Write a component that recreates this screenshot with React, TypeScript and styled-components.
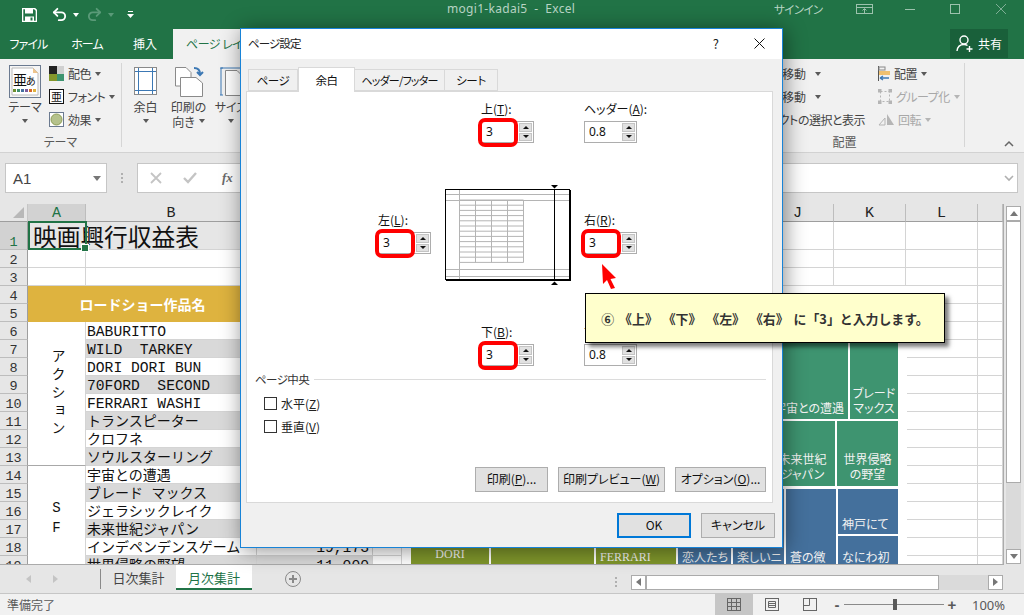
import React from 'react';
import styled, { createGlobalStyle } from 'styled-components';
import { Undo2, Redo2 } from 'lucide-react';

const UI_FONT = '"Noto Sans CJK JP", "Noto Sans", sans-serif';
const CELL_FONT = '"Liberation Mono", "Noto Sans CJK JP", monospace';

const GlobalStyle = createGlobalStyle`
    html, body {
        margin: 0;
        padding: 0;
        overflow: hidden;
        background: #e6e6e6;
    }
    * { box-sizing: border-box; }
`

const Window = styled.div`
    position: relative;
    width: 1024px;
    height: 615px;
    display: flex;
    flex-direction: column;
    overflow: hidden;
    font-family: ${UI_FONT};
    font-feature-settings: "palt";
    font-size: 12px;
    color: #444;
`

/* ---------- title bar ---------- */
const TitleBar = styled.div`
    position: relative;
    height: 29px;
    background: #217346;
    display: flex;
    align-items: center;
    padding-left: 22px;
    color: #c6ddd0;
`
const Quick = styled.div<{ $w: number }>`
    width: ${p => p.$w}px;
    display: flex;
    align-items: center;
    flex: none;
`
const TitleText = styled.div`
    position: absolute;
    left: 447px;
    top: 0;
    line-height: 17px;
    font-family: "Noto Sans", sans-serif;
    font-size: 12px;
    letter-spacing: 0.3px;
    white-space: pre;
    color: #b9d5c5;
`
const SignIn = styled.div`
    position: absolute;
    left: 774px;
    top: 1px;
    line-height: 17px;
    color: #b9d5c5;
    font-size: 11.5px;
    letter-spacing: -0.6px;
`
const WinControls = styled.svg`
    position: absolute;
    left: 850px;
    top: 0;
`

/* ---------- tabs ---------- */
const TabBar = styled.div`
    height: 30px;
    background: #217346;
    display: flex;
    position: relative;
`
const RibbonTab = styled.div<{ $w: number; $tight?: boolean }>`
    width: ${p => p.$w}px;
    text-align: center;
    line-height: 29px;
    font-size: 12px;
    letter-spacing: ${p => (p.$tight ? '-0.9px' : '0')};
    color: #fff;
`
const ActiveRibbonTab = styled.div`
    width: 96px;
    padding-left: 13px;
    line-height: 29px;
    white-space: nowrap;
    overflow: hidden;
    letter-spacing: -0.5px;
    color: #217346;
    background: #f1f1f1;
`
const ShareButton = styled.div`
    margin-left: auto;
    margin-right: 16px;
    width: 58px;
    height: 29px;
    background: #19603a;
    color: #fff;
    display: flex;
    align-items: center;
    justify-content: center;
    gap: 3px;
    font-size: 12px;
`

/* ---------- ribbon ---------- */
const Ribbon = styled.div`
    height: 94px;
    background: #f1f1f1;
    border-bottom: 1px solid #d2d2d2;
    display: flex;
    color: #444;
`
const Group = styled.div<{ $w: number }>`
    position: relative;
    width: ${p => p.$w}px;
    flex: none;
    margin: 4px 0 5px;
    border-right: 1px solid #d6d6d6;
    display: flex;
    flex-direction: column;
`
const GroupBody = styled.div`
    flex: 1;
    display: flex;
`
const PageBody = styled(GroupBody)`
    width: 128px;
    flex: none;
    margin: 4px 0 0 2px;
`
const GroupLabel = styled.div`
    height: 20px;
    line-height: 22px;
    text-align: center;
    color: #595959;
`
const LargeButton = styled.div<{ $w: number }>`
    width: ${p => p.$w}px;
    display: flex;
    flex-direction: column;
    align-items: center;
    line-height: 15px;
    text-align: center;
`
const LargeIcon = styled.div`
    height: 36px;
    display: flex;
    align-items: center;
    justify-content: center;
`
const SmallList = styled.div`
    display: flex;
    flex-direction: column;
    margin: -1px 0 0 -1px;
`
const SmallRow = styled.div<{ $dim?: boolean }>`
    height: 23px;
    display: flex;
    align-items: center;
    gap: 4px;
    white-space: nowrap;
    letter-spacing: -0.5px;
    color: ${p => (p.$dim ? '#a8a8a8' : '#444')};
`
const Caret = styled.span<{ $dim?: boolean; $light?: string }>`
    display: inline-block;
    width: 0;
    height: 0;
    border-left: 3.5px solid transparent;
    border-right: 3.5px solid transparent;
    border-top: 4px solid ${p => p.$light || (p.$dim ? '#b5b5b5' : '#595959')};
    flex: none;
`
const QuickCaret = styled(Caret)`
    margin-left: 5px;
`
const NameCaret = styled(Caret)`
    border-left-width: 4px;
    border-right-width: 4px;
    border-top-width: 5px;
    border-top-color: #777;
`
const CaretLine = styled.div`
    height: 14px;
    display: flex;
    align-items: center;
    gap: 4px;
`
const ArrangeLeft = styled.div`
    width: 140px;
    margin-top: -1px;
    display: flex;
    flex-direction: column;
    align-items: flex-end;
    flex: none;
`
const ArrangeRight = styled.div`
    margin: -1px 0 0 13px;
    display: flex;
    flex-direction: column;
`
const Spacer = styled.div`
    flex: 1;
`
const RibbonEnd = styled.div`
    width: 59px;
    flex: none;
`
const MoveRow = styled(SmallRow)`
    padding-right: 44px;
    gap: 9px;
    letter-spacing: 0;
`
const Collapse = styled.svg`
    position: absolute;
    left: 1004px;
    top: 140px;
`

/* ---------- formula bar ---------- */
const FormulaBar = styled.div`
    height: 51px;
    background: #e6e6e6;
    display: flex;
    padding: 10px 6px 11px 5px;
`
const NameBox = styled.div`
    width: 102px;
    background: #fff;
    border: 1px solid #c6c6c6;
    display: flex;
    align-items: center;
    justify-content: space-between;
    padding: 0 5px 0 7px;
    font-family: "Liberation Sans", sans-serif;
    font-size: 15px;
    color: #444;
`
const Grip = styled.div`
    width: 2px;
    height: 10px;
    background-image: linear-gradient(#b0b0b0 50%, transparent 50%);
    background-size: 2px 4px;
`
const GripSlot = styled.div`
    width: 30px;
    display: flex;
    align-items: center;
    justify-content: center;
`
const FormulaInput = styled.div`
    flex: 1;
    background: #fff;
    border: 1px solid #c6c6c6;
    display: flex;
    align-items: center;
    padding-right: 3px;
    justify-content: space-between;
`
const FormulaGlyph = styled.div`
    font-family: "Liberation Serif", serif;
    font-style: italic;
    font-weight: 700;
    font-size: 13px;
    color: #6a6a6a;
    margin-left: 4px;
`
const FormulaTools = styled.div`
    display: flex;
    align-items: center;
    gap: 21px;
    padding-left: 12px;
`

/* ---------- sheet ---------- */
const SheetArea = styled.div`
    position: relative;
    height: 361px;
    background: #e6e6e6;
    display: flex;
`
const Grid = styled.div`
    position: relative;
    width: 1004px;
    height: 361px;
    overflow: hidden;
    display: grid;
    grid-template-columns: 28px 58px 171px 116px 29px 120px 120px 120px 72px 72px 72px 25px;
    grid-template-rows: 18px 28px repeat(19, 18px);
    border-right: 1px solid #ababab;
    border-bottom: 1px solid #ababab;
`
const Corner = styled.div`
    background: #e6e6e6;
    border-right: 1px solid #c6c6c6;
    border-bottom: 1px solid #9e9e9e;
    display: flex;
    align-items: flex-end;
    justify-content: flex-end;
    padding: 0 3px 3px 0;
`
const ColHead = styled.div<{ $active?: boolean }>`
    background: ${p => (p.$active ? '#d2d2d2' : '#e6e6e6')};
    color: ${p => (p.$active ? '#217346' : '#222')};
    border-right: 1px solid #bdbdbd;
    border-bottom: 1px solid #9e9e9e;
    text-align: center;
    font-family: ${CELL_FONT};
    font-size: 15px;
    line-height: 20px;
`
const RowHead = styled.div<{ $row: number; $active?: boolean }>`
    grid-column: 1;
    grid-row: ${p => p.$row + 1};
    background: ${p => (p.$active ? '#d2d2d2' : '#e6e6e6')};
    color: ${p => (p.$active ? '#217346' : '#333')};
    border-right: 1px solid #9e9e9e;
    border-bottom: 1px solid #bdbdbd;
    display: flex;
    align-items: flex-end;
    justify-content: center;
    font-family: ${CELL_FONT};
    font-size: 13.5px;
    line-height: 13px;
`
const Cell = styled.div<{ $row: number; $col: number; $stripe?: boolean }>`
    grid-column: ${p => p.$col + 2};
    grid-row: ${p => p.$row + 1};
    background: ${p => (p.$stripe ? '#d9d9d9' : '#fff')};
    border-right: 1px solid #d4d4d4;
    border-bottom: 1px solid #d4d4d4;
    overflow: hidden;
`
const TextCell = styled(Cell)<{ $kana?: boolean }>`
    padding-left: 1px;
    font-family: ${CELL_FONT};
    font-size: ${p => (p.$kana ? '14px' : '14.67px')};
    font-feature-settings: normal;
    line-height: 20px;
    white-space: pre;
    color: #111;
`
const NumberCell = styled(TextCell)`
    text-align: right;
    padding-right: 3px;
`
const TitleCell = styled.div`
    grid-column: 2 / 4;
    grid-row: 2;
    position: relative;
    z-index: 1;
    font-family: ${UI_FONT};
    font-feature-settings: normal;
    font-size: 23.7px;
    line-height: 29px;
    padding-left: 5px;
    color: #111;
    border-bottom: 1px solid #d4d4d4;
`
const BlankTitle = styled.div`
    grid-column: 3;
    grid-row: 2;
    border-right: 1px solid #d4d4d4;
    border-left: 1px solid #d4d4d4;
`
const Selection = styled.div`
    position: absolute;
    left: 28px;
    top: 17px;
    width: 59px;
    height: 29px;
    border: 2px solid #217346;
    z-index: 2;
    &::after {
        content: '';
        position: absolute;
        right: -4px;
        bottom: -4px;
        width: 6px;
        height: 6px;
        background: #217346;
        border: 1px solid #fff;
    }
`
const GoldHead = styled.div`
    grid-column: 2 / 4;
    grid-row: 5 / 7;
    background: #deb33f;
    color: #fff;
    font-weight: 700;
    font-size: 14px;
    font-feature-settings: normal;
    display: flex;
    align-items: center;
    justify-content: center;
`
const GenreCell = styled.div<{ $from: number; $to: number }>`
    grid-column: 2;
    grid-row: ${p => p.$from + 1} / ${p => p.$to + 2};
    background: #fff;
    border-right: 1px solid #d4d4d4;
    border-bottom: 1px solid #a8a8a8;
    display: flex;
    align-items: center;
    justify-content: center;
    font-family: ${CELL_FONT};
    font-size: 14px;
    font-feature-settings: normal;
    color: #111;
`
const VerticalText = styled.div`
    writing-mode: vertical-rl;
    text-orientation: upright;
    letter-spacing: 4px;
`

/* chart floating over the cells */
const Chart = styled.div`
    position: absolute;
    left: 402px;
    top: 82px;
    width: 505px;
    height: 279px;
    background: #fff;
    padding: 14px 9px 0 9px;
    display: flex;
    flex-direction: column;
    gap: 2px;
    z-index: 1;
`
const ChartRow = styled.div<{ $h: number; $end?: boolean; $shift?: number }>`
    height: ${p => p.$h}px;
    margin-top: ${p => p.$shift || 0}px;
    flex: none;
    display: flex;
    gap: 2px;
    justify-content: ${p => (p.$end ? 'flex-end' : 'flex-start')};
`
const Tile = styled.div<{ $color: string; $w?: number; $h?: number; $flex?: boolean; $align?: string; $serif?: boolean; $pad?: number }>`
    background: ${p => p.$color};
    width: ${p => (p.$w ? `${p.$w}px` : 'auto')};
    height: ${p => (p.$h ? `${p.$h}px` : 'auto')};
    flex: ${p => (p.$flex ? 1 : 'none')};
    color: #f2f2f2;
    display: flex;
    flex-direction: column;
    justify-content: flex-end;
    align-items: ${p => p.$align || 'center'};
    padding: 0 ${p => (p.$align === 'flex-start' ? 0 : 2)}px ${p => (p.$pad === undefined ? 4 : p.$pad)}px ${p => (p.$align === 'flex-start' ? 4 : 2)}px;
    font-size: 12px;
    line-height: 15px;
    white-space: nowrap;
    overflow: hidden;
    font-family: ${p => (p.$serif ? '"Liberation Serif", serif' : UI_FONT)};
`
const Tiles = styled.div<{ $w: number }>`
    width: ${p => p.$w}px;
    flex: none;
    display: flex;
    flex-direction: column;
    gap: 2px;
`

/* scrollbars */
const VScroll = styled.div`
    margin-left: 2px;
    width: 15px;
    padding-top: 2px;
    display: flex;
    flex-direction: column;
    height: 360px;
`
const ScrollButton = styled.div<{ $w?: number; $h?: number }>`
    width: ${p => p.$w || 15}px;
    height: ${p => p.$h || 15}px;
    flex: none;
    background: #fff;
    border: 1px solid #ababab;
    display: flex;
    align-items: center;
    justify-content: center;
`
const VThumb = styled.div`
    height: 262px;
    background: #fff;
    border: 1px solid #ababab;
`
const VTrack = styled.div`
    flex: 1;
    background: #dadada;
`

/* sheet tabs */
const SheetTabs = styled.div`
    height: 28px;
    background: #e6e6e6;
    display: flex;
    align-items: flex-start;
`
const TabNav = styled.div`
    width: 100px;
    height: 27px;
    display: flex;
    align-items: center;
    padding-left: 26px;
    gap: 22px;
`
const SheetTab = styled.div<{ $active?: boolean }>`
    height: 25px;
    background: ${p => (p.$active ? '#fff' : 'transparent')};
    color: ${p => (p.$active ? '#217346' : '#444')};
    border-bottom: ${p => (p.$active ? '2px solid #217346' : 'none')};
    width: ${p => (p.$active ? 76 : 75)}px;
    text-align: center;
    line-height: 26px;
    font-size: 13px;
    font-feature-settings: normal;
`
const TabDivider = styled.div`
    width: 1px;
    height: 20px;
    margin-top: 4px;
    background: #8a8a8a;
`
const AddSheet = styled.svg`
    margin: 5px 0 0 32px;
`
const TabRight = styled.div`
    margin-left: auto;
    display: flex;
    align-items: center;
    height: 22px;
    margin-top: 6px;
    margin-right: 21px;
    gap: 14px;
`
const HScroll = styled.div`
    width: 372px;
    height: 15px;
    display: flex;
    background: #dadada;
`
const HThumb = styled.div`
    width: 293px;
    background: #fff;
    border: 1px solid #ababab;
`
const HFill = styled.div`
    flex: 1;
`

/* status bar */
const StatusBar = styled.div`
    height: 22px;
    background: #f1f1f1;
    border-top: 1px solid #c6c6c6;
    display: flex;
    align-items: center;
    padding-left: 7px;
    color: #595959;
    font-size: 12px;
    font-feature-settings: normal;
`
const ViewButtons = styled.div`
    margin-left: auto;
    display: flex;
    height: 21px;
`
const ViewButton = styled.div<{ $active?: boolean }>`
    width: 38px;
    display: flex;
    align-items: center;
    justify-content: center;
    background: ${p => (p.$active ? '#c6c6c6' : 'transparent')};
`
const ZoomBox = styled.div`
    display: flex;
    align-items: center;
    width: 195px;
    padding-left: 3px;
    flex: none;
`
const ZoomSign = styled.div`
    width: 10px;
    text-align: center;
    font-family: "Liberation Sans", sans-serif;
    font-weight: 700;
    font-size: 15px;
    color: #595959;
`
const ZoomTrack = styled.div`
    position: relative;
    width: 100px;
    height: 1px;
    margin: 0 3px 0 2px;
    background: #8a8a8a;
`
const ZoomThumb = styled.div`
    position: absolute;
    left: 49px;
    top: -5px;
    width: 4px;
    height: 11px;
    background: #595959;
`
const ZoomValue = styled.div`
    margin-left: 15px;
    font-family: "Noto Sans", sans-serif;
    font-size: 13px;
    color: #595959;
`

/* ---------- dialog ---------- */
const Dialog = styled.div`
    position: absolute;
    left: 240px;
    top: 28px;
    width: 543px;
    height: 520px;
    background: #f0f0f0;
    border: 1px solid #1883d7;
    box-shadow: 2px 2px 20px rgba(0, 0, 0, 0.45);
    z-index: 5;
    display: flex;
    flex-direction: column;
    color: #111;
`
const DialogTitle = styled.div`
    height: 30px;
    background: #fff;
    display: flex;
    align-items: center;
    padding: 0 0 2px 7px;
    color: #222;
    font-size: 11.5px;
    letter-spacing: -0.9px;
    flex: none;
`
const DialogClose = styled.svg`
    margin-left: 36px;
    margin-right: 17px;
`
const Help = styled.div`
    margin-left: auto;
    font-size: 13px;
`
const DialogTabs = styled.div`
    height: 32px;
    display: flex;
    align-items: flex-end;
    padding-left: 7px;
    flex: none;
`
const DialogTab = styled.div<{ $w: number; $active?: boolean; $first?: boolean; $tight?: boolean }>`
    position: relative;
    width: ${p => p.$w}px;
    height: ${p => (p.$active ? 25 : 22)}px;
    margin-bottom: ${p => (p.$active ? -1 : 0)}px;
    background: ${p => (p.$active ? '#fff' : '#f0f0f0')};
    border: 1px solid #d9d9d9;
    border-bottom: ${p => (p.$active ? 'none' : '1px solid #d9d9d9')};
    border-left: ${p => (p.$active || p.$first ? '1px solid #d9d9d9' : 'none')};
    text-align: center;
    line-height: ${p => (p.$active ? 25 : 21)}px;
    font-size: ${p => (p.$tight ? 11 : 11.5)}px;
    letter-spacing: ${p => (p.$tight ? -0.8 : -0.4)}px;
    white-space: nowrap;
    z-index: ${p => (p.$active ? 1 : 0)};
`
const Panel = styled.div`
    height: 412px;
    margin-left: 5px;
    margin-right: 9px;
    background: #fff;
    border: 1px solid #d9d9d9;
    display: flex;
    flex-direction: column;
    padding: 8px 6px 10px 8px;
    flex: none;
`
const MarginGrid = styled.div`
    margin-left: 123px;
    display: grid;
    grid-template-columns: 67px 139px 1fr;
    grid-template-rows: 43px 180px 43px;
`
const Field = styled.div<{ $col: number; $row: number; $x?: number; $y?: number }>`
    grid-column: ${p => p.$col};
    grid-row: ${p => p.$row};
    margin-left: ${p => p.$x || 0}px;
    margin-top: ${p => p.$y || 0}px;
    display: flex;
    flex-direction: column;
`
const FieldLabel = styled.div`
    height: 21px;
    line-height: 18px;
    font-size: 12px;
    white-space: nowrap;
    u { text-underline-offset: 1px; }
`
const Spin = styled.div`
    position: relative;
    width: 53px;
    height: 22px;
    border: 1px solid #adadad;
    background: #fff;
    display: flex;
`
const SpinValue = styled.div`
    flex: 1;
    padding-left: 4px;
    font-family: "Noto Sans", sans-serif;
    font-size: 12px;
    line-height: 20px;
    color: #111;
`
const SpinButtons = styled.div`
    width: 15px;
    padding: 1px;
    display: flex;
    flex-direction: column;
    gap: 1px;
`
const SpinButton = styled.div`
    flex: 1;
    background: #e1e1e1;
    border: 1px solid #c4c4c4;
    display: flex;
    align-items: center;
    justify-content: center;
`
const SpinTriangle = styled.span<{ $down?: boolean }>`
    width: 0;
    height: 0;
    border-left: 3px solid transparent;
    border-right: 3px solid transparent;
    border-${p => (p.$down ? 'top' : 'bottom')}: 3px solid #111;
`
const RedRing = styled.div`
    position: absolute;
    left: -4px;
    top: -4px;
    width: 40px;
    height: 29px;
    border: 4px solid #f00;
    border-radius: 7px;
`
const Preview = styled.svg`
    grid-column: 2;
    grid-row: 2;
    margin: 41px 0 0 -1px;
`
const CenterHead = styled.div`
    margin-top: 6px;
    display: flex;
    align-items: center;
    gap: 5px;
    height: 14px;
    color: #333;
    font-size: 11.5px;
    letter-spacing: -0.6px;
`
const CenterRule = styled.div`
    flex: 1;
    height: 1px;
    background: #dcdcdc;
`
const CheckRow = styled.label<{ $top: number }>`
    margin-left: 9px;
    margin-top: ${p => p.$top}px;
    height: 15px;
    display: flex;
    align-items: center;
    gap: 4px;
    font-size: 12px;
    color: #222;
`
const CheckBox = styled.span`
    width: 13px;
    height: 13px;
    border: 1px solid #333;
    background: #fff;
`
const CheckText = styled.span`
    line-height: 13px;
`
const PanelButtons = styled.div`
    margin-top: auto;
    display: flex;
    justify-content: flex-end;
    gap: 10px;
`
const DialogButton = styled.div<{ $w: number; $default?: boolean }>`
    width: ${p => p.$w}px;
    height: 25px;
    background: #e1e1e1;
    border: ${p => (p.$default ? '2px solid #0078d7' : '1px solid #adadad')};
    font-size: 12px;
    line-height: ${p => (p.$default ? 20 : 22)}px;
    text-align: center;
    white-space: nowrap;
    color: #111;
`
const DialogFooter = styled.div`
    display: flex;
    justify-content: flex-end;
    gap: 10px;
    padding: 10px 7px 0 0;
`

/* ---------- callout ---------- */
const Callout = styled.div`
    position: absolute;
    left: 585px;
    top: 293px;
    width: 360px;
    height: 50px;
    background: #ffffcc;
    border: 1px solid #000;
    box-shadow: 4px 4px 4px rgba(0, 0, 0, 0.5);
    z-index: 7;
    display: flex;
    align-items: center;
    justify-content: center;
    font-size: 12.9px;
    font-weight: 700;
    font-feature-settings: normal;
    word-spacing: 2px;
    color: #333;
    white-space: nowrap;
`
const RedArrow = styled.svg`
    position: absolute;
    left: 600px;
    top: 263px;
    z-index: 7;
`

const arrowIcon = (dir: 'left' | 'right' | 'up' | 'down', color: string) => {
    const pts = { left: '0,4 5,0 5,8', right: '5,4 0,0 0,8', up: '4,0 0,5 8,5', down: '4,5 0,0 8,0' }[dir];
    return (
        <svg width={dir === 'left' || dir === 'right' ? 5 : 8} height={dir === 'left' || dir === 'right' ? 8 : 5}>
            <polygon points={pts} fill={color} />
        </svg>
    );
};

const FIELD_ROWS: [number, string, boolean][] = [
    [6, 'BABURITTO', false],
    [7, 'WILD  TARKEY', false],
    [8, 'DORI DORI BUN', false],
    [9, '70FORD  SECOND', false],
    [10, 'FERRARI WASHI', false],
    [11, 'トランスピーター', true],
    [12, 'クロフネ', true],
    [13, 'ソウルスターリング', true],
    [14, '宇宙との遭遇', true],
    [15, 'ブレード マックス', true],
    [16, 'ジェラシックレイク', true],
    [17, '未来世紀ジャパン', true],
    [18, 'インデペンデンスゲーム', true],
    [19, '世界侵略の野望', true],
];

const COLS = ['A', 'B', 'C', 'D', 'E', 'F', 'G', 'J', 'K', 'L', ''];
const GREEN = '#3e9470';
const BLUE = '#44709c';
const OLIVE = '#7f962b';

const SpinField = (props: { label: string; mark: string; value: string; col: number; row: number; x?: number; y?: number; red?: boolean }) => (
    <Field $col={props.col} $row={props.row} $x={props.x} $y={props.y}>
        <FieldLabel>{props.label}(<u>{props.mark}</u>):</FieldLabel>
        <Spin>
            <SpinValue>{props.value}</SpinValue>
            <SpinButtons>
                <SpinButton><SpinTriangle /></SpinButton>
                <SpinButton><SpinTriangle $down /></SpinButton>
            </SpinButtons>
            {props.red ? <RedRing /> : null}
        </Spin>
    </Field>
);

const PagePreview = () => {
    const rows = [];
    for (let i = 0; i <= 12; i++) {
        const y = 16 + i * 5.2;
        rows.push(<line key={i} x1="15.5" x2="79.5" y1={y} y2={y} stroke="#b4b4b4" />);
    }
    return (
        <Preview width="130" height="105" viewBox="0 0 130 105">
            <rect x="1.5" y="5.5" width="124" height="90" fill="#fff" stroke="#000" />
            <line x1="2" x2="127" y1="96.5" y2="96.5" stroke="#000" />
            <line x1="126.5" x2="126.5" y1="6" y2="97" stroke="#000" />
            <line x1="2" x2="125" y1="10.5" y2="10.5" stroke="#b4b4b4" />
            <line x1="2" x2="125" y1="16.5" y2="16.5" stroke="#b4b4b4" />
            <line x1="2" x2="125" y1="85.5" y2="85.5" stroke="#b4b4b4" />
            <line x1="2" x2="125" y1="92.5" y2="92.5" stroke="#b4b4b4" />
            <line x1="15.5" x2="15.5" y1="6" y2="95" stroke="#b4b4b4" />
            {rows}
            {[31.5, 47.5, 63.5, 79.5].map(x => (
                <line key={x} x1={x} x2={x} y1="16" y2="78.5" stroke="#b4b4b4" />
            ))}
            <line x1="110.5" x2="110.5" y1="5" y2="96" stroke="#000" />
            <polygon points="107,1 114,1 110.5,4.5" fill="#000" />
            <polygon points="107,101 114,101 110.5,97.5" fill="#000" />
        </Preview>
    );
};

const App = () => (
    <Window>
        <GlobalStyle />
        <TitleBar>
            <Quick $w={29}>
                <svg width="15" height="14" viewBox="0 0 15 14">
                    <path d="M0.5 0.5H12.5L14.5 2.5V13.5H0.5Z" fill="none" stroke="#fff" strokeWidth="1.6" />
                    <rect x="3" y="1" width="8" height="4.5" fill="#fff" />
                    <rect x="3" y="8.5" width="9" height="5" fill="#fff" />
                    <rect x="8.5" y="9.5" width="2" height="3" fill="#217346" />
                </svg>
            </Quick>
            <Quick $w={35}>
                <Undo2 size={17} color="#fff" strokeWidth={2.6} />
                <QuickCaret $light="#fff" />
            </Quick>
            <Quick $w={41}>
                <Redo2 size={17} color="#5a9a78" strokeWidth={2.6} />
                <QuickCaret $light="#5a9a78" />
            </Quick>
            <svg width="7" height="8" viewBox="0 0 7 8">
                <rect x="1" y="0" width="5" height="1" fill="#fff" />
                <polygon points="0,3 7,3 3.5,7" fill="#fff" />
            </svg>
            <TitleText>mogi1-kadai5  -  Excel</TitleText>
            <SignIn>サインイン</SignIn>
            <WinControls width="170" height="18" viewBox="0 0 170 18" fill="none" stroke="#9cc2ad">
                <rect x="6.5" y="4.5" width="16" height="9" />
                <path d="M6.5 7.5H22.5M14.5 13V9M12.5 10.5L14.5 8.5L16.5 10.5" />
                <path d="M55 9.5H65" />
                <rect x="100.5" y="4.5" width="9" height="9" />
                <path d="M146 4L156 14M156 4L146 14" stroke="#7fae96" />
            </WinControls>
        </TitleBar>
        <TabBar>
            <RibbonTab $w={57} $tight>ファイル</RibbonTab>
            <RibbonTab $w={60} $tight>ホーム</RibbonTab>
            <RibbonTab $w={56}>挿入</RibbonTab>
            <ActiveRibbonTab>ページ レイアウト</ActiveRibbonTab>
            <ShareButton>
                <svg width="19" height="19" viewBox="0 0 19 19" fill="none" stroke="#fff" strokeWidth="1.4">
                    <circle cx="8" cy="6" r="4" />
                    <path d="M1 17C1.5 12.5 4 10.5 8 10.5C9.5 10.5 10.5 10.8 11.5 11.5" />
                    <path d="M13.5 12V18M10.5 15H16.5" />
                </svg>
                共有
            </ShareButton>
        </TabBar>
        <Ribbon>
            <Group $w={122}>
                <GroupBody>
                    <LargeButton $w={50}>
                        <LargeIcon>
                            <svg width="32" height="33" viewBox="0 0 32 33">
                                <rect x="0.5" y="0.5" width="31" height="32" fill="#f5f5f5" stroke="#6b7a90" />
                                <path d="M3 3H24L29 8V30H3Z" fill="#fff" stroke="#bbb" />
                                <path d="M24 3L29 8H24Z" fill="#efc58c" />
                                <text x="4" y="20" fontSize="14" fill="#111" fontFamily={UI_FONT}>亜</text>
                                <text x="17" y="20" fontSize="10" fill="#111" fontFamily={UI_FONT}>あ</text>
                                {['#6c8f2e', '#3f8f6d', '#4470a0', '#7c5c9c', '#d96b2b', '#dfb33f'].map((c, i) => (
                                    <rect key={c} x={4 + i * 4} y="24" width="3" height="3" fill={c} />
                                ))}
                            </svg>
                        </LargeIcon>
                        <div>テーマ</div>
                        <CaretLine><Caret /></CaretLine>
                    </LargeButton>
                    <SmallList>
                        <SmallRow>
                            <svg width="15" height="15" viewBox="0 0 15 15">
                                <rect width="8" height="8" fill="#222" />
                                <rect x="8" width="7" height="8" fill="#d0d0d0" />
                                <rect y="8" width="8" height="7" fill="#84962b" />
                                <rect x="8" y="8" width="7" height="7" fill="#3e9470" />
                            </svg>
                            配色 <Caret />
                        </SmallRow>
                        <SmallRow>
                            <svg width="15" height="15" viewBox="0 0 15 15">
                                <rect x="0.5" y="0.5" width="14" height="14" fill="#fff" stroke="#111" />
                                <text x="2" y="12" fontSize="11" fill="#111" fontFamily={UI_FONT}>亜</text>
                            </svg>
                            フォント <Caret />
                        </SmallRow>
                        <SmallRow>
                            <svg width="15" height="15" viewBox="0 0 15 15">
                                <rect x="0.5" y="0.5" width="14" height="14" fill="#fff" stroke="#6b7a90" />
                                <circle cx="7.5" cy="7.5" r="5.5" fill="#b5c28c" stroke="#8d9c55" />
                            </svg>
                            効果 <Caret />
                        </SmallRow>
                    </SmallList>
                </GroupBody>
                <GroupLabel>テーマ</GroupLabel>
            </Group>
            <PageBody>
                <LargeButton $w={43}>
                    <LargeIcon>
                        <svg width="23" height="28" viewBox="0 0 23 28" fill="none">
                            <rect x="0.5" y="0.5" width="22" height="27" fill="#fff" stroke="#8a8a8a" />
                            <path d="M4.5 1V27M18.5 1V27M1 4.5H22M1 23.5H22" stroke="#3c78b4" />
                        </svg>
                    </LargeIcon>
                    <div>余白</div>
                    <CaretLine><Caret /></CaretLine>
                </LargeButton>
                <LargeButton $w={43}>
                    <LargeIcon>
                        <svg width="30" height="31" viewBox="0 0 30 31" fill="none">
                            <path d="M1.5 1.5H12L17 6.5V20H1.5Z" fill="#fff" stroke="#8a8a8a" />
                            <path d="M6.5 11.5H22L28.5 17V30.5H6.5Z" fill="#fff" stroke="#8a8a8a" />
                            <path d="M20 2C24 2 26 4 26 8M23 6L26 9L29 6" stroke="#3c78b4" strokeWidth="2" />
                        </svg>
                    </LargeIcon>
                    <div>印刷の</div>
                    <CaretLine>向き<Caret /></CaretLine>
                </LargeButton>
                <LargeButton $w={42}>
                    <LargeIcon>
                        <svg width="23" height="29" viewBox="0 0 23 29" fill="none">
                            <path d="M1 1V28M0 1H3M0 28H3M1 1H22" stroke="#3c78b4" />
                            <path d="M5.5 3.5H17L22.5 9V28.5H5.5Z" fill="#fff" stroke="#8a8a8a" />
                        </svg>
                    </LargeIcon>
                    <div>サイズ</div>
                    <CaretLine><Caret /></CaretLine>
                </LargeButton>
            </PageBody>
            <Spacer />
            <Group $w={240}>
                <GroupBody>
                    <ArrangeLeft>
                        <MoveRow>前面へ移動 <Caret /></MoveRow>
                        <MoveRow>背面へ移動 <Caret /></MoveRow>
                        <SmallRow>オブジェクトの選択と表示</SmallRow>
                    </ArrangeLeft>
                    <ArrangeRight>
                        <SmallRow>
                            <svg width="12" height="15" viewBox="0 0 12 15" fill="none">
                                <path d="M0.5 0V15" stroke="#555" />
                                <rect x="1" y="1" width="6" height="3" fill="none" stroke="#888" />
                                <rect x="1" y="5" width="11" height="4" fill="#efc070" />
                                <path d="M2 12H11M2 12L5 10M2 12L5 14" stroke="#3c78b4" strokeWidth="1.3" />
                            </svg>
                            配置 <Caret />
                        </SmallRow>
                        <SmallRow $dim>
                            <svg width="14" height="15" viewBox="0 0 14 15" fill="none" stroke="#b5b5b5">
                                <rect x="2.5" y="2.5" width="9" height="10" strokeDasharray="2 2" />
                                <rect x="0" y="0" width="3" height="3" fill="#b5b5b5" />
                                <rect x="11" y="0" width="3" height="3" fill="#b5b5b5" />
                                <rect x="0" y="12" width="3" height="3" fill="#b5b5b5" />
                                <rect x="11" y="12" width="3" height="3" fill="#b5b5b5" />
                            </svg>
                            グループ化 <Caret $dim />
                        </SmallRow>
                        <SmallRow $dim>
                            <svg width="16" height="13" viewBox="0 0 16 13">
                                <path d="M1 12L7 5V12Z" fill="none" stroke="#b5b5b5" />
                                <path d="M9 1L16 12H9Z" fill="#b5b5b5" />
                            </svg>
                            回転 <Caret $dim />
                        </SmallRow>
                    </ArrangeRight>
                </GroupBody>
                <GroupLabel>配置</GroupLabel>
            </Group>
            <RibbonEnd />
        </Ribbon>
        <Collapse width="10" height="8" viewBox="0 0 10 8" fill="none" stroke="#666" strokeWidth="1.5">
            <path d="M1 6L5 2L9 6" />
        </Collapse>
        <FormulaBar>
            <NameBox>A1 <NameCaret /></NameBox>
            <GripSlot><Grip /></GripSlot>
            <FormulaInput>
                <FormulaTools>
                    <svg width="12" height="12" viewBox="0 0 12 12" stroke="#c4c4c4" strokeWidth="1.8"><path d="M1 1L11 11M11 1L1 11" /></svg>
                    <svg width="14" height="12" viewBox="0 0 14 12" fill="none" stroke="#c4c4c4" strokeWidth="2.4"><path d="M1 6L5 10L13 1" /></svg>
                    <FormulaGlyph>fx</FormulaGlyph>
                </FormulaTools>
                <svg width="10" height="7" viewBox="0 0 10 7" fill="none" stroke="#b0b0b0" strokeWidth="1.6"><path d="M1 1L5 5L9 1" /></svg>
            </FormulaInput>
        </FormulaBar>
        <SheetArea>
            <Grid>
                <Corner>
                    <svg width="11" height="11" viewBox="0 0 11 11"><polygon points="11,0 11,11 0,11" fill="#b8b8b8" /></svg>
                </Corner>
                {COLS.map((c, i) => (
                    <ColHead key={i} $active={c === 'A'}>{c}</ColHead>
                ))}
                {Array.from({ length: 19 }, (_, i) => (
                    <RowHead key={i} $row={i + 1} $active={i === 0}>{i + 1}</RowHead>
                ))}
                {Array.from({ length: 19 }, (_, r) =>
                    COLS.map((_c, c) => (
                        c > 1 ? <Cell key={`${r}-${c}`} $row={r + 1} $col={c} $stripe={c === 2 && r + 1 > 5 && (r + 1) % 2 === 1} /> : null
                    ))
                )}
                <BlankTitle />
                <Cell $row={2} $col={0} />
                <Cell $row={2} $col={1} />
                <Cell $row={3} $col={0} />
                <Cell $row={3} $col={1} />
                <TitleCell>映画興行収益表</TitleCell>
                <Selection />
                <GoldHead>ロードショー作品名</GoldHead>
                <GenreCell $from={6} $to={13}><VerticalText>アクション</VerticalText></GenreCell>
                <GenreCell $from={14} $to={19}><VerticalText>SF</VerticalText></GenreCell>
                {FIELD_ROWS.map(([row, text, kana]) => (
                    <TextCell key={row} $row={row} $col={1} $kana={kana} $stripe={row % 2 === 1}>{text}</TextCell>
                ))}
                <NumberCell $row={18} $col={2}>19,173</NumberCell>
                <NumberCell $row={19} $col={2} $stripe>11,000</NumberCell>
                <Chart>
                    <ChartRow $h={186} $end>
                        <Tiles $w={128}>
                            <ChartRow $h={119}>
                                <Tile $color={GREEN} $flex>宇宙との遭遇</Tile>
                                <Tile $color={GREEN} $w={48}><div>ブレード</div><div>マックス</div></Tile>
                            </ChartRow>
                            <ChartRow $h={65}>
                                <Tile $color={GREEN} $flex $pad={5}><div>未来世紀</div><div>ジャパン</div></Tile>
                                <Tile $color={GREEN} $w={61} $pad={5}><div>世界侵略</div><div>の野望</div></Tile>
                            </ChartRow>
                        </Tiles>
                    </ChartRow>
                    <ChartRow $h={76} $shift={1}>
                        <Tile $color={OLIVE} $w={78} $serif $pad={3}>DORI</Tile>
                        <Tile $color={OLIVE} $w={103} />
                        <Tile $color={OLIVE} $w={80} $serif $align="flex-start" $pad={0}>FERRARI</Tile>
                        <Tile $color={BLUE} $w={53} $align="flex-start" $pad={1}>恋人たち</Tile>
                        <Tile $color={BLUE} $w={51} $align="flex-start" $pad={1}>楽しいニ</Tile>
                        <Tile $color={BLUE} $w={50} $align="flex-start" $pad={1}>蒼の微</Tile>
                        <Tiles $w={60}>
                            <Tile $color={BLUE} $h={45} $align="flex-start" $pad={3}>神戸にて</Tile>
                            <Tile $color={BLUE} $h={29} $align="flex-start" $pad={1}>なにわ初</Tile>
                        </Tiles>
                    </ChartRow>
                </Chart>
            </Grid>
            <VScroll>
                <ScrollButton>{arrowIcon('up', '#777')}</ScrollButton>
                <VThumb />
                <VTrack />
                <ScrollButton>{arrowIcon('down', '#777')}</ScrollButton>
            </VScroll>
        </SheetArea>
        <SheetTabs>
            <TabNav>
                {arrowIcon('left', '#c4c4c4')}
                {arrowIcon('right', '#c4c4c4')}
            </TabNav>
            <TabDivider />
            <SheetTab>日次集計</SheetTab>
            <SheetTab $active>月次集計</SheetTab>
            <AddSheet width="18" height="18" viewBox="0 0 18 18" fill="none" stroke="#8a8a8a">
                <circle cx="9" cy="9" r="7.5" />
                <path d="M5 9H13M9 5V13" strokeWidth="2" />
            </AddSheet>
            <TabRight>
                <Grip />
                <HScroll>
                    <ScrollButton>{arrowIcon('left', '#777')}</ScrollButton>
                    <HThumb />
                    <HFill />
                    <ScrollButton>{arrowIcon('right', '#777')}</ScrollButton>
                </HScroll>
            </TabRight>
        </SheetTabs>
        <StatusBar>
            準備完了
            <ViewButtons>
                <ViewButton $active>
                    <svg width="14" height="13" viewBox="0 0 14 13" fill="none" stroke="#666">
                        <rect x="0.5" y="0.5" width="13" height="12" />
                        <path d="M4.5 1V12M9.5 1V12M1 4.5H13M1 8.5H13" />
                    </svg>
                </ViewButton>
                <ViewButton>
                    <svg width="14" height="13" viewBox="0 0 14 13" fill="none" stroke="#666">
                        <rect x="0.5" y="0.5" width="13" height="12" />
                        <path d="M3.5 3.5H10.5V9.5H3.5ZM3 5.5H11M3 7.5H11" />
                    </svg>
                </ViewButton>
                <ViewButton>
                    <svg width="14" height="13" viewBox="0 0 14 13" fill="none" stroke="#666">
                        <rect x="0.5" y="0.5" width="13" height="12" />
                        <path d="M6.5 0V7.5H1M6.5 7.5" />
                    </svg>
                </ViewButton>
            </ViewButtons>
            <ZoomBox>
                <ZoomSign>-</ZoomSign>
                <ZoomTrack><ZoomThumb /></ZoomTrack>
                <ZoomSign>+</ZoomSign>
                <ZoomValue>100%</ZoomValue>
            </ZoomBox>
        </StatusBar>

        <Dialog>
            <DialogTitle>
                ページ設定
                <Help>?</Help>
                <DialogClose width="11" height="11" viewBox="0 0 11 11" stroke="#111"><path d="M0.5 0.5L10.5 10.5M10.5 0.5L0.5 10.5" /></DialogClose>
            </DialogTitle>
            <DialogTabs>
                <DialogTab $w={50} $first>ページ</DialogTab>
                <DialogTab $w={57} $active>余白</DialogTab>
                <DialogTab $w={90} $tight>ヘッダー/フッター</DialogTab>
                <DialogTab $w={53}>シート</DialogTab>
            </DialogTabs>
            <Panel>
                <MarginGrid>
                    <SpinField col={2} row={1} x={36} label="上" mark="T" value="3" red />
                    <SpinField col={3} row={1} label="ヘッダー" mark="A" value="0.8" />
                    <SpinField col={1} row={2} y={68} label="左" mark="L" value="3" red />
                    <PagePreview />
                    <SpinField col={3} row={2} y={68} label="右" mark="R" value="3" red />
                    <SpinField col={2} row={3} x={36} label="下" mark="B" value="3" red />
                    <SpinField col={3} row={3} label="フッター" mark="F" value="0.8" />
                </MarginGrid>
                <CenterHead>ページ中央<CenterRule /></CenterHead>
                <CheckRow $top={10}><CheckBox /><CheckText>水平(<u>Z</u>)</CheckText></CheckRow>
                <CheckRow $top={8}><CheckBox /><CheckText>垂直(<u>V</u>)</CheckText></CheckRow>
                <PanelButtons>
                    <DialogButton $w={73}>印刷(<u>P</u>)...</DialogButton>
                    <DialogButton $w={107}>印刷プレビュー(<u>W</u>)</DialogButton>
                    <DialogButton $w={91}>オプション(<u>O</u>)...</DialogButton>
                </PanelButtons>
            </Panel>
            <DialogFooter>
                <DialogButton $w={74} $default>OK</DialogButton>
                <DialogButton $w={74}>キャンセル</DialogButton>
            </DialogFooter>
        </Dialog>

        <RedArrow width="17" height="27" viewBox="0 0 17 27">
            <polygon points="2,1 16,15 10.5,16 15,25 11,26 7,17 3,21" fill="#f00" />
        </RedArrow>
        <Callout>⑥ 《上》 《下》 《左》 《右》 に「3」と入力します。</Callout>
    </Window>
);

export default App;
